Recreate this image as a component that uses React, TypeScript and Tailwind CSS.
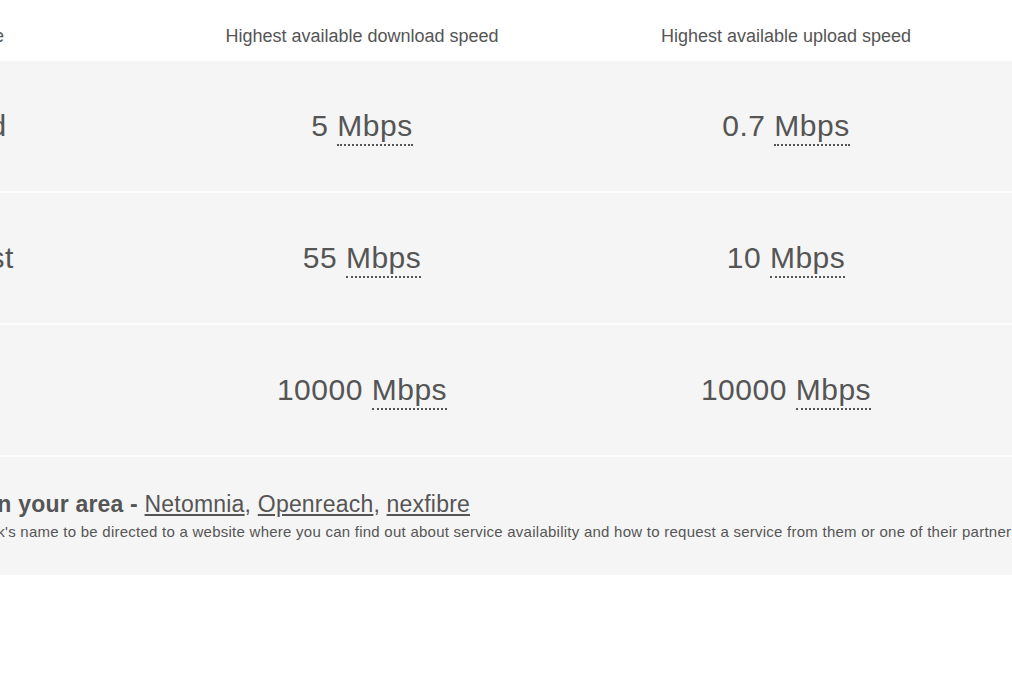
const rows = [
  { name: "Standard", down: "5", up: "0.7" },
  { name: "Superfast", down: "55", up: "10" },
  { name: "Ultrafast", down: "10000", up: "10000" },
];

function Speed({ value }: { value: string }) {
  return (
    <span>
      {value}{" "}
      <abbr
        title="Megabits per second"
        className="no-underline border-b-2 border-dotted border-[#555] pb-[2px]"
      >
        Mbps
      </abbr>
    </span>
  );
}

export default function App() {
  return (
    <div className="w-[1012px] h-[700px] overflow-hidden bg-white font-['Liberation_Sans',Arial,sans-serif] text-[#555]">
      <div className="ml-[-124px] w-[1136px]">
        <div className="grid grid-cols-[274px_424px_424px] h-[61px] items-center pt-[12px] text-[18px]">
          <div className="ml-[-2px]">Connection type</div>
          <div className="text-center">Highest available download speed</div>
          <div className="text-center">Highest available upload speed</div>
        </div>

        {rows.map((r) => (
          <div
            key={r.name}
            className="grid grid-cols-[274px_424px_424px] h-[132px] items-center bg-[#f5f5f5] border-b-[2px] border-[#fcfcfc] text-[30px] tracking-[0.5px] leading-none"
          >
            <div className="pl-[5px]">{r.name}</div>
            <div className="text-center">
              <Speed value={r.down} />
            </div>
            <div className="text-center">
              <Speed value={r.up} />
            </div>
          </div>
        ))}

        <div className="bg-[#f5f5f5] h-[118px] pt-[32px] whitespace-nowrap">
          <p className="text-[23px] tracking-[0.2px] leading-[30px] ml-[3px]">
            <span className="font-bold">Networks in your area - </span>
            <a className="underline underline-offset-2">Netomnia</a>,{" "}
            <a className="underline underline-offset-2">Openreach</a>,{" "}
            <a className="underline underline-offset-2">nexfibre</a>
          </p>
          <p className="text-[15px] tracking-[0.25px] leading-[20px] mt-[3px] ml-[2px]">
            Click on a network's name to be directed to a website where you can find out about service availability and how to request a service from them or one of their partners.
          </p>
        </div>
      </div>
    </div>
  );
}
